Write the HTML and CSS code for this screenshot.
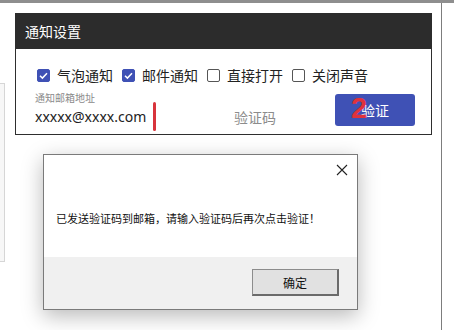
FILE: index.html
```html
<!DOCTYPE html>
<html lang="zh-CN">
<head>
<meta charset="utf-8">
<link rel="stylesheet" href="styles.css">
</head>
<body>
<div class="screen">
  <div class="main">
    <div class="side-panel"></div>
    <section class="card">
      <header class="card-head">通知设置</header>
      <div class="card-body">
        <div class="checks">
          <label class="check"><span class="box on"><svg viewBox="0 0 13 13" width="13" height="13"><path d="M3 6.8 L5.4 9.1 L10 4.2" fill="none" stroke="#fff" stroke-width="1.5"/></svg></span><span class="check-text">气泡通知</span></label>
          <label class="check"><span class="box on"><svg viewBox="0 0 13 13" width="13" height="13"><path d="M3 6.8 L5.4 9.1 L10 4.2" fill="none" stroke="#fff" stroke-width="1.5"/></svg></span><span class="check-text">邮件通知</span></label>
          <label class="check"><span class="box"></span><span class="check-text">直接打开</span></label>
          <label class="check"><span class="box"></span><span class="check-text">关闭声音</span></label>
        </div>
        <div class="fields">
          <div class="email-field">
            <div class="field-label">通知邮箱地址</div>
            <div class="field-value">xxxxx@xxxx.com</div>
          </div>
          <span class="mark"></span>
          <div class="code-field">验证码</div>
          <button class="verify">验证<span class="two">2</span></button>
        </div>
      </div>
    </section>
    <div class="dialog">
      <div class="dialog-top">
        <div class="close"><svg width="12" height="12" viewBox="0 0 12 12"><path d="M1 1 L11 11 M11 1 L1 11" stroke="#222" stroke-width="1.1"/></svg></div>
        <p class="msg">已发送验证码到邮箱，请输入验证码后再次点击验证！</p>
      </div>
      <div class="dialog-foot">
        <button class="ok">确定</button>
      </div>
    </div>
  </div>
</div>
</body>
</html>
```

FILE: styles.css
```css
* { box-sizing: border-box; }
html, body { margin: 0; padding: 0; background: #fff; }
body {
  font-family: "Noto Sans CJK SC", "Noto Sans", sans-serif;
  width: 454px;
  height: 330px;
  overflow: hidden;
}
.screen {
  border-top: 3px solid #8e8e8e;
  height: 330px;
}
.main {
  position: relative;
  width: 442px;
  height: 327px;
  border-right: 1px solid #7d7d7d;
  padding: 10px 0 0 15px;
}
.side-panel {
  position: absolute;
  left: -1px;
  top: 80px;
  width: 6px;
  height: 179px;
  background: #f7f7f7;
  border: 1px solid #d6d6d6;
}
.card {
  position: relative;
  width: 417px;
}
.card-head {
  height: 36px;
  background: #2c2c2c;
  color: #fff;
  font-size: 14px;
  line-height: 36px;
  padding-left: 10px;
}
.card-body {
  border: 1px solid #2e2e2e;
  border-top: none;
  padding: 16px 16px 0 19px;
  height: 86px;
}
.checks {
  display: flex;
  height: 20px;
  align-items: center;
  padding-left: 2px;
}
.check {
  display: flex;
  align-items: center;
  margin-right: 9px;
}
.box {
  width: 13px;
  height: 13px;
  border: 1px solid #555;
  border-radius: 2px;
  background: #fff;
  display: flex;
}
.box.on {
  background: #3f51b5;
  border-color: #3f51b5;
}
.box svg { margin: -1px; flex: none; }
.check-text {
  font-size: 14px;
  color: #222;
  margin-left: 7px;
  line-height: 20px;
}
.fields {
  display: flex;
  align-items: flex-start;
  margin-top: 7px;
  height: 35px;
}
.email-field { width: 118px; }
.field-label {
  font-size: 10px;
  line-height: 12px;
  color: #8a8a8a;
}
.field-value {
  margin-top: 3px;
  font-family: "Noto Sans", "Open Sans", sans-serif;
  font-size: 14px;
  line-height: 20px;
  color: #222;
  white-space: nowrap;
}
.mark {
  width: 3px;
  height: 29px;
  margin-top: 10px;
  background: #d8343c;
  border-radius: 2px;
}
.code-field {
  margin-left: 78px;
  margin-top: 15px;
  font-size: 14px;
  line-height: 20px;
  color: #8c8c8c;
}
.verify {
  position: relative;
  margin-left: auto;
  margin-top: 2px;
  width: 80px;
  height: 32px;
  border: none;
  border-radius: 3px;
  background: #3f51b5;
  color: #fff;
  font-family: "Noto Sans CJK SC", sans-serif;
  font-size: 14px;
  padding: 0;
}
.two {
  position: absolute;
  left: 16px;
  top: -2px;
  font-family: "Liberation Sans", sans-serif;
  font-weight: 700;
  font-size: 29px;
  line-height: 32px;
  color: #e0323c;
}
.dialog {
  position: absolute;
  left: 43px;
  top: 151px;
  width: 315px;
  height: 156px;
  border: 1px solid #7a7a7a;
  background: #fff;
  box-shadow: 0 6px 20px rgba(0,0,0,0.28);
  display: flex;
  flex-direction: column;
}
.dialog-top {
  position: relative;
  height: 102px;
  padding: 54px 0 0 12px;
}
.close {
  position: absolute;
  right: 9px;
  top: 9px;
  width: 12px;
  height: 12px;
}
.close svg { display: block; }
.msg {
  margin: 0;
  font-size: 11px;
  line-height: 18px;
  color: #111;
}
.dialog-foot {
  flex: 1;
  background: #f0f0f0;
  display: flex;
  justify-content: flex-end;
  align-items: flex-start;
  padding: 12px 18px 0 0;
}
.ok {
  width: 87px;
  height: 27px;
  background: #e1e1e1;
  border: 1px solid #8c8c8c;
  border-right: 2px solid #6a6a6a;
  border-bottom: 2px solid #6a6a6a;
  font-family: "Noto Sans CJK SC", sans-serif;
  font-size: 12px;
  color: #111;
  padding: 0;
}
```
